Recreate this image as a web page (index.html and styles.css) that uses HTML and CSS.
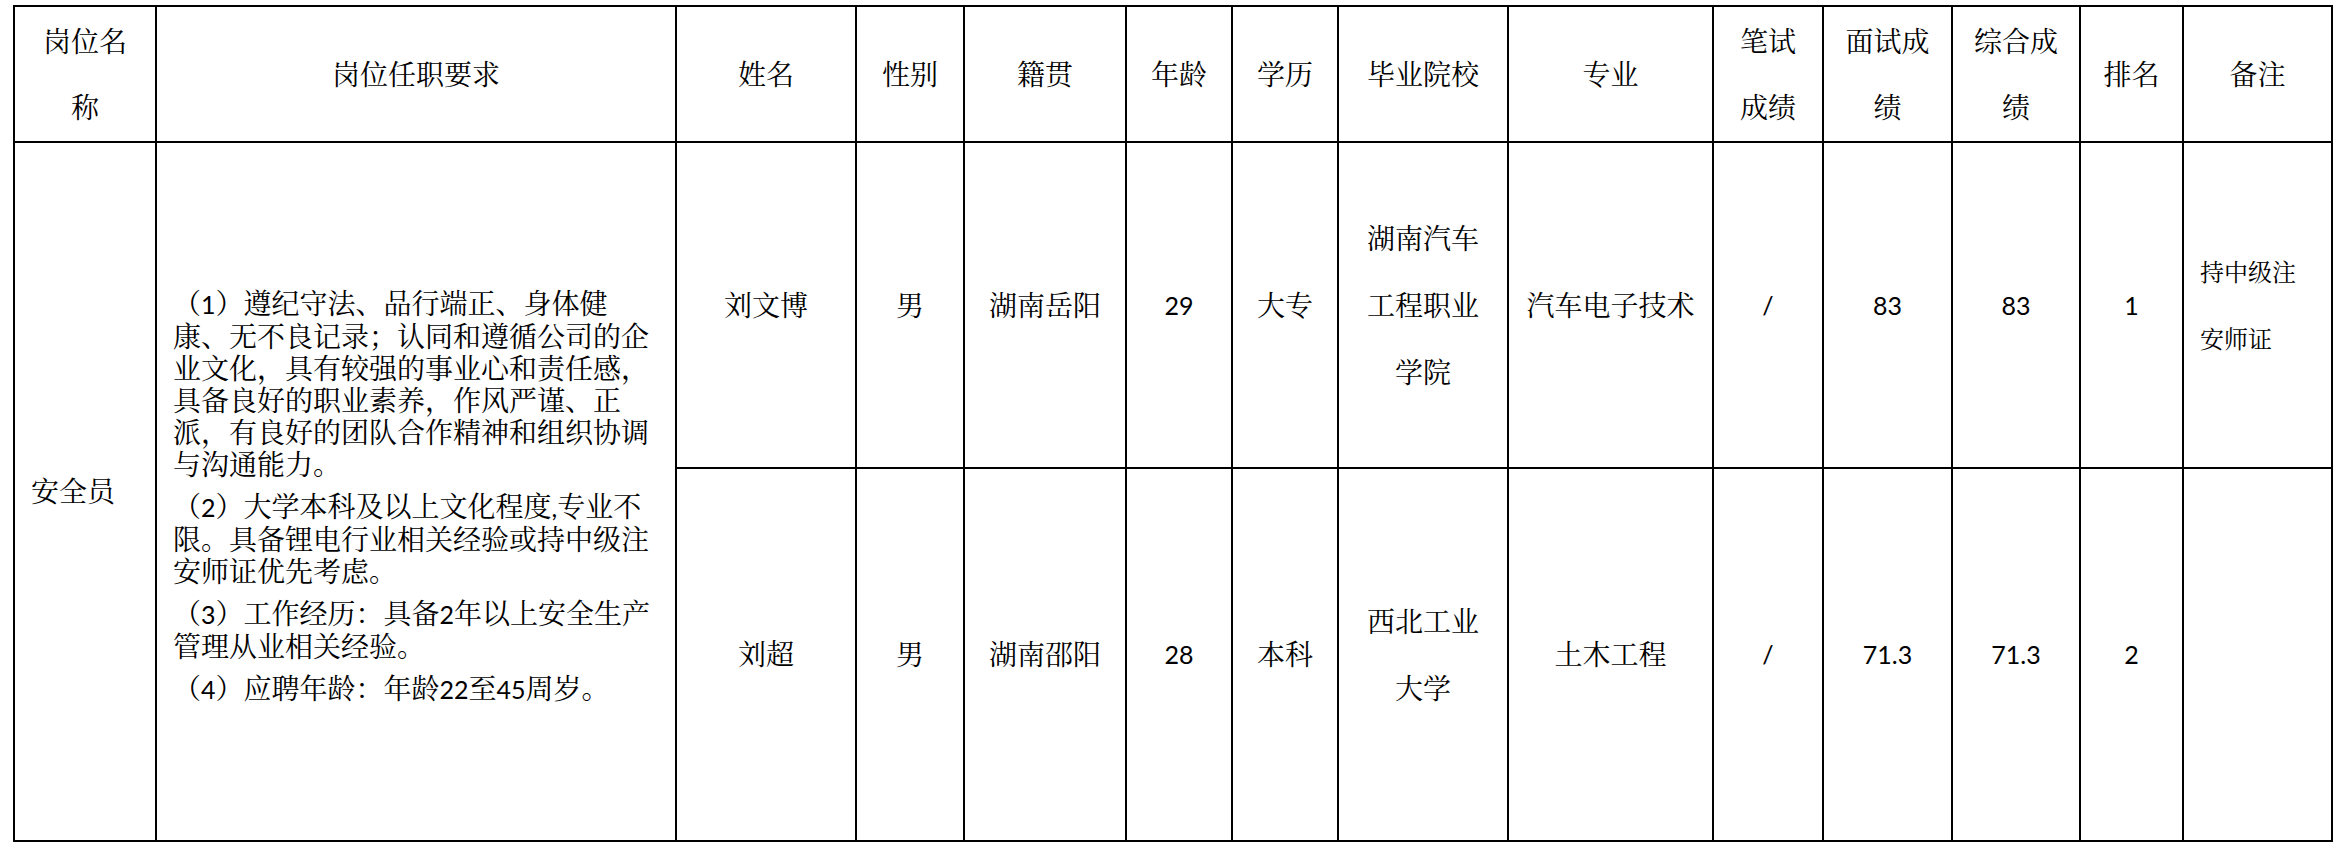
FILE: index.html
```html
<!DOCTYPE html>
<html lang="zh-CN">
<head>
<meta charset="utf-8">
<title>岗位人员名单</title>
<link rel="stylesheet" href="styles.css">
</head>
<body>
<div class="sheet">
<table class="grid">
  <colgroup>
    <col class="c1"><col class="c2"><col class="c3"><col class="c4"><col class="c5"><col class="c6"><col class="c7">
    <col class="c8"><col class="c9"><col class="c10"><col class="c11"><col class="c12"><col class="c13"><col class="c14">
  </colgroup>
  <tr class="head">
    <th>岗位名称</th>
    <th>岗位任职要求</th>
    <th>姓名</th>
    <th>性别</th>
    <th>籍贯</th>
    <th>年龄</th>
    <th>学历</th>
    <th>毕业院校</th>
    <th>专业</th>
    <th>笔试成绩</th>
    <th>面试成绩</th>
    <th>综合成绩</th>
    <th>排名</th>
    <th>备注</th>
  </tr>
  <tr class="r1">
    <td rowspan="2" class="left">安全员</td>
    <td rowspan="2" class="req">
      <p>（<span class="d">1</span>）遵纪守法、品行端正、身体健康、无不良记录；认同和遵循公司的企业文化，具有较强的事业心和责任感，具备良好的职业素养，作风严谨、正派，有良好的团队合作精神和组织协调与沟通能力。</p>
      <p>（<span class="d">2</span>）大学本科及以上文化程度<span class="d">,</span>专业不限。具备锂电行业相关经验或持中级注安师证优先考虑。</p>
      <p>（<span class="d">3</span>）工作经历：具备<span class="d">2</span>年以上安全生产管理从业相关经验。</p>
      <p>（<span class="d">4</span>）应聘年龄：年龄<span class="d">22</span>至<span class="d">45</span>周岁。</p>
    </td>
    <td>刘文博</td>
    <td>男</td>
    <td>湖南岳阳</td>
    <td class="num">29</td>
    <td>大专</td>
    <td>湖南汽车工程职业学院</td>
    <td>汽车电子技术</td>
    <td class="num">/</td>
    <td class="num">83</td>
    <td class="num">83</td>
    <td class="num">1</td>
    <td class="note">持中级注安师证</td>
  </tr>
  <tr class="r2">
    <td>刘超</td>
    <td>男</td>
    <td>湖南邵阳</td>
    <td class="num">28</td>
    <td>本科</td>
    <td>西北工业大学</td>
    <td>土木工程</td>
    <td class="num">/</td>
    <td class="num">71.3</td>
    <td class="num">71.3</td>
    <td class="num">2</td>
    <td class="note"></td>
  </tr>
</table>
</div>
</body>
</html>
```
FILE: styles.css
```css
html, body {
  margin: 0;
  padding: 0;
  background: #ffffff;
}

.sheet {
  padding: 5px 0 0 13px;
}

.grid {
  border-collapse: collapse;
  table-layout: fixed;
  width: 2320px;
  color: #000000;
  font-family: "Lato", "Noto Serif CJK SC", "Noto Sans CJK SC", sans-serif;
  font-size: 28px;
}

.c1 { width: 142px; }
.c2 { width: 520px; }
.c3 { width: 180px; }
.c4 { width: 108px; }
.c5 { width: 162px; }
.c6 { width: 106px; }
.c7 { width: 106px; }
.c8 { width: 170px; }
.c9 { width: 205px; }
.c10 { width: 110px; }
.c11 { width: 129px; }
.c12 { width: 128px; }
.c13 { width: 103px; }
.c14 { width: 149px; }

.grid th,
.grid td {
  border: 2px solid #000000;
  padding: 0 16px;
  text-align: center;
  vertical-align: middle;
  font-weight: normal;
  line-height: 67px;
  overflow: hidden;
}

.grid th {
  line-height: 66px;
}

.head { height: 136px; }
.r1 { height: 326px; }
.r2 { height: 373px; }

.grid td.left {
  text-align: left;
}

.grid td.req {
  text-align: left;
  line-height: 32px;
  padding: 8px 16px 0 16px;
}

.req p {
  margin: 0 0 10px 0;
}

.req p:last-child {
  margin-bottom: 0;
}

.d {
  font-family: "Lato", sans-serif;
  font-size: 25px;
}

.grid td.num {
  font-family: "Lato", sans-serif;
  font-size: 25px;
}

.grid td.note {
  text-align: left;
  font-size: 24px;
}
```
